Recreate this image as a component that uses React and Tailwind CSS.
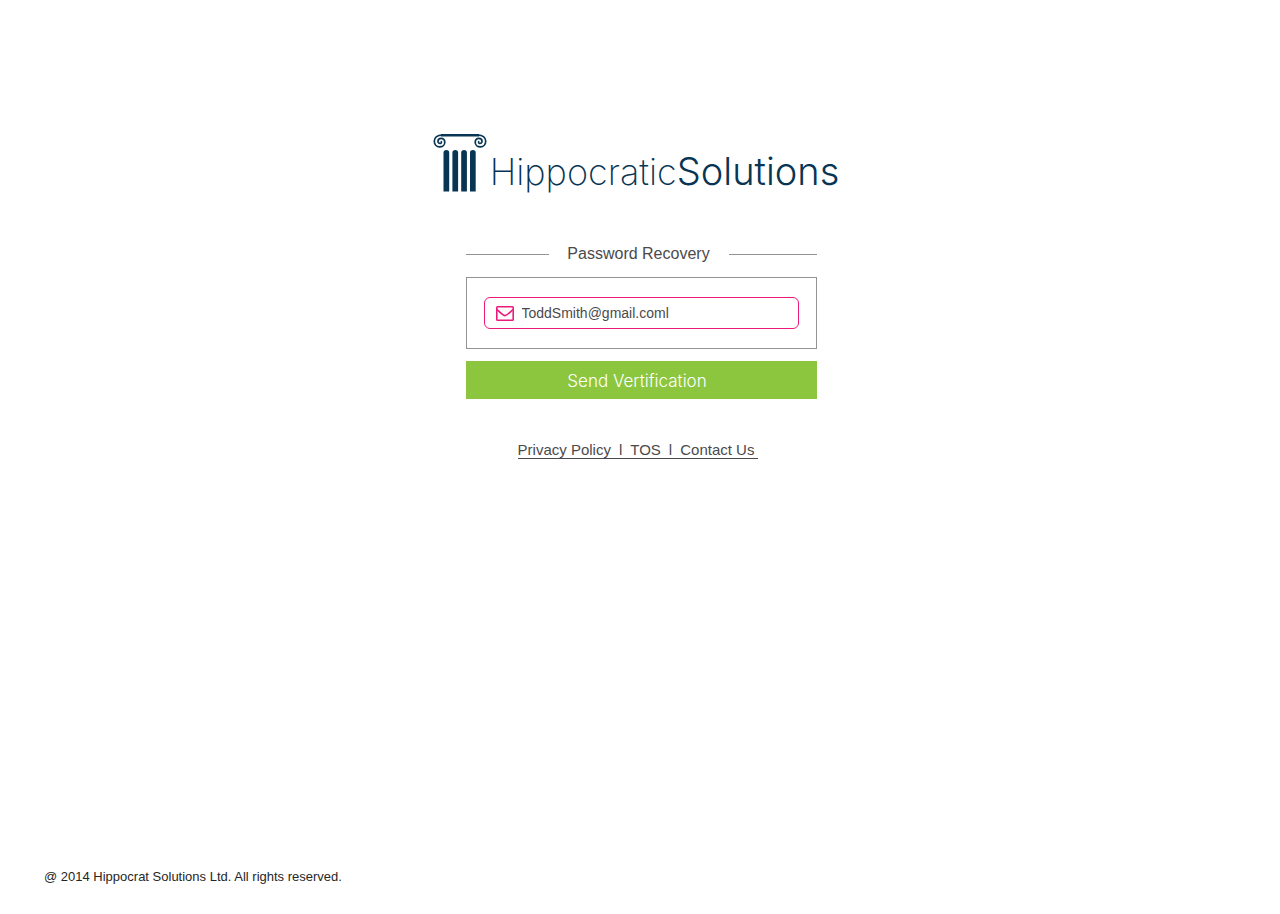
import React from "react";

function Scroll() {
  return (
    <path
      d="M9 2.200 C4 2.200 1.300 4.700 1.300 8 C1.300 11.500 3.600 13.900 6.500 13.900 C9.600 13.900 11.800 11.900 11.800 9.200 C11.800 6.900 10.200 5.300 8.200 5.300 C6.300 5.300 5 6.500 5 8.200 C5 9.700 6 10.600 7.200 10.500 C8.200 10.400 8.600 9.500 8.300 8.700"
      fill="none"
      stroke="#083553"
      strokeWidth="1.7"
      strokeLinecap="round"
    />
  );
}

function ColumnLogo() {
  return (
    <svg className="h-[60px] w-[54px] shrink-0" viewBox="0 0 54 60" aria-hidden="true">
      <path d="M8 2.200H46" stroke="#083553" strokeWidth="2.400" />
      <Scroll />
      <g transform="translate(54 0) scale(-1 1)">
        <Scroll />
      </g>
      {[10.5, 19.4, 28.2, 37].map((x) => (
        <path key={x} d={`M${x} 58.500V19.800a2.850 2.850 0 0 1 5.700 0V58.500Z`} fill="#083553" />
      ))}
    </svg>
  );
}

function EnvelopeIcon() {
  return (
    <svg className="h-[15px] w-[18px] shrink-0" viewBox="0 0 18 15" fill="none" stroke="#ec1b7b" aria-hidden="true">
      <rect x="0.8" y="0.8" width="16.4" height="13.4" rx="0.8" strokeWidth="1.6" />
      <path d="M1 3.500C4 6.200 7 9.600 9 9.600S14 6.200 17 3.500" strokeWidth="1.6" />
    </svg>
  );
}

export default function App() {
  return (
    <div className="flex min-h-screen flex-col bg-white font-['Liberation_Sans',sans-serif] text-[#4a4a4c]">
      <main className="flex flex-col items-center pt-[133px] pl-[2px]">
        <h1 className="mr-[10px] flex items-start text-[#083553]">
          <ColumnLogo />
          <span className="ml-[3px] flex items-baseline pt-[10px] font-['Inter',sans-serif] leading-[56px]">
            <span className="text-[36px] font-extralight">Hippocratic</span>
            <span className="text-[38px] font-light">Solutions</span>
          </span>
        </h1>

        <form className="mt-[42px] flex w-full max-w-[351px] flex-col" onSubmit={(e) => e.preventDefault()}>
          <h2 className="flex items-center justify-between text-[16px] leading-6">
            <span className="h-px w-[83px] bg-[#939395]" />
            Password Recovery
            <span className="h-px w-[88px] bg-[#939395]" />
          </h2>
          <div className="mt-[11px] border border-[#939395] px-[17px] py-[19px]">
            <label className="flex h-8 items-center gap-2 rounded-md border border-[#ec1b7b] pr-3 pl-[11px]">
              <EnvelopeIcon />
              <input
                type="text"
                aria-label="Email address"
                defaultValue="ToddSmith@gmail.coml"
                className="min-w-0 flex-1 bg-transparent text-[14px] leading-5 outline-none"
              />
            </label>
          </div>
          <button type="submit" className="mt-3 h-[38px] bg-[#8cc63e] pt-1 pr-2 font-['Inter',sans-serif] text-[17px] font-light text-white">
            Send Vertification
          </button>
        </form>

        <nav className="mt-[42px] mr-[6px] flex gap-2 border-b border-[#4a4a4c] pr-1 text-[15px] leading-[17px]">
          <a href="#privacy">Privacy Policy</a>
          <span>l</span>
          <a href="#tos">TOS</a>
          <span>l</span>
          <a href="#contact">Contact Us</a>
        </nav>
      </main>

      <footer className="mt-auto px-11 pb-[27px] text-[13px] leading-5 text-[#262626]">
        @ 2014 Hippocrat Solutions Ltd. All rights reserved.
      </footer>
    </div>
  );
}
